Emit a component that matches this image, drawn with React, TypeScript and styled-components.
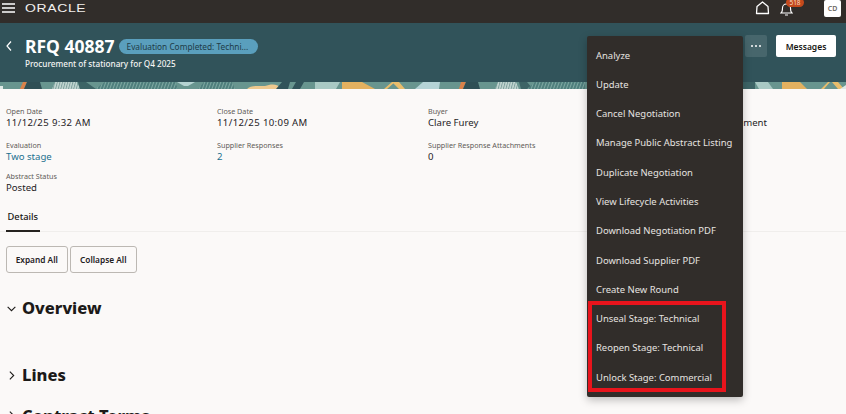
import React from "react";
import styled, { createGlobalStyle } from "styled-components";

const Global = createGlobalStyle`
  html, body { margin: 0; padding: 0; background: #fbf9f8; }
  body { width: 846px; height: 414px; overflow: hidden; font-family: "Noto Sans", "Open Sans", sans-serif; color: #161513; }
  * { box-sizing: border-box; }
`;

const Page = styled.div`
  position: relative;
  width: 846px;
  height: 414px;
  overflow: hidden;
`;
const TopBar = styled.header`
  height: 23px;
  background: #312d2a;
  display: flex;
  align-items: center;
  padding: 0 5px 7px 2px;
  color: #fff;
`;
const Logo = styled.span`
  margin-left: 10px;
  font-family: "Liberation Sans", sans-serif;
  font-size: 11px;
  letter-spacing: 0.5px;
  transform: scaleX(1.27);
  transform-origin: left center;
  color: #f2f0ee;
`;
const TopRight = styled.div`
  margin-left: auto;
  display: flex;
  align-items: center;
`;
const BellWrap = styled.div`
  position: relative;
  margin-left: 10px;
  width: 16px;
  height: 16px;
`;
const Badge = styled.span`
  position: absolute;
  left: 6px;
  top: -2px;
  height: 9px;
  width: 18px;
  text-align: center;
  border-radius: 5px;
  background: #c4491c;
  color: #f6d9c4;
  font-size: 6.5px;
  line-height: 9px;
`;
const Avatar = styled.div`
  width: 17px;
  height: 17px;
  margin-left: 28px;
  background: #fff;
  border-radius: 2px;
  color: #6b6763;
  font-size: 7px;
  font-weight: 600;
  display: flex;
  align-items: center;
  justify-content: center;
`;
const Hero = styled.section`
  height: 59px;
  background: #31535a;
  display: flex;
  align-items: flex-start;
  padding: 12px 10px 0 5px;
`;
const TitleBlock = styled.div`
  margin-left: 10px;
`;
const TitleRow = styled.div`
  display: flex;
  align-items: center;
  gap: 4px;
`;
const Title = styled.h1`
  margin: 0;
  font-size: 17.5px;
  line-height: 22px;
  font-weight: 700;
  color: #fff;
`;
const Pill = styled.span`
  width: 139px;
  height: 15px;
  border-radius: 8px;
  background: #5a9fbd;
  color: #1e3c48;
  font-size: 8.3px;
  line-height: 15px;
  padding-left: 8px;
  white-space: nowrap;
`;
const Subtitle = styled.div`
  font-size: 8.2px;
  line-height: 12px;
  margin-top: 1px;
  font-weight: 500;
  color: #f4f4f2;
`;
const HeroActions = styled.div`
  margin-left: auto;
  display: flex;
  align-items: center;
  gap: 9px;
`;
const DotsButton = styled.button`
  width: 22px;
  height: 22px;
  border: 0;
  border-radius: 2px;
  background: #47666c;
  color: #fff;
  display: flex;
  align-items: center;
  justify-content: center;
  padding: 0;
`;
const MessagesButton = styled.button`
  width: 60px;
  height: 22px;
  border: 0;
  border-radius: 2px;
  background: #fff;
  color: #161513;
  font-family: inherit;
  font-size: 8.5px;
  font-weight: 600;
  padding: 0;
`;
const Band = styled.div`
  height: 7px;
  overflow: hidden;
  line-height: 0;
`;
const Facts = styled.div`
  display: grid;
  grid-template-columns: repeat(3, 211px) 128px;
  padding: 18px 6px 0;
`;
const Fact = styled.div<{ $h: number; $end?: boolean }>`
  height: ${(p) => p.$h}px;
  white-space: nowrap;
  text-align: ${(p) => (p.$end ? "right" : "left")};
`;
const FactLabel = styled.div`
  font-size: 7.2px;
  line-height: 9px;
  min-height: 9px;
  color: #5f5b57;
`;
const FactValue = styled.div<{ $link?: boolean; $date?: boolean }>`
  font-size: 9.6px;
  line-height: 13px;
  letter-spacing: ${(p) => (p.$date ? "0.37px" : "0")};
  color: ${(p) => (p.$link ? "#22708f" : "#25221f")};
`;
const Tabs = styled.div`
  display: flex;
  height: 23.5px;
  margin-top: 7px;
  border-bottom: 1px solid #f0eeec;
  padding-left: 6px;
`;
const Tab = styled.div`
  height: 23.5px;
  padding: 0 1.5px;
  font-size: 9.3px;
  font-weight: 500;
  line-height: 16px;
  border-bottom: 2px solid #25221f;
`;
const ButtonRow = styled.div`
  display: flex;
  gap: 2.5px;
  padding: 14px 0 0 6px;
`;
const PlainButton = styled.button<{ $w: number }>`
  width: ${(p) => p.$w}px;
  height: 27px;
  border: 1px solid #bcb8b3;
  border-radius: 3px;
  background: #fbf9f8;
  font-family: inherit;
  font-size: 8.3px;
  font-weight: 600;
  color: #25221f;
  padding: 0;
`;
const Section = styled.div<{ $top: number }>`
  display: flex;
  align-items: center;
  margin-top: ${(p) => p.$top}px;
  padding-left: 6px;
  gap: 5px;
  height: 24px;
  color: #1c1a18;
`;
const SectionTitle = styled.h2`
  margin: 0;
  font-size: 16.5px;
  line-height: 24px;
  font-weight: 800;
  color: #1c1a18;
`;
const Menu = styled.nav`
  position: absolute;
  left: 586.5px;
  top: 35.5px;
  width: 156px;
  height: 361px;
  background: #312d2a;
  border-radius: 2px;
  box-shadow: 0 3px 8px rgba(0, 0, 0, 0.25);
  padding-top: 5px;
`;
const MenuItem = styled.div`
  height: 29.3px;
  line-height: 29.3px;
  padding-left: 9.5px;
  font-size: 9.45px;
  color: #e6e3e0;
  white-space: nowrap;
`;
const Highlight = styled.div`
  position: absolute;
  left: 588px;
  top: 301px;
  width: 138px;
  height: 91px;
  border: 4px solid #e8141c;
  pointer-events: none;
`;

const Chevron = ({ d, size = 11 }: { d: string; size?: number }) => (
  <svg width={size} height={size} viewBox="0 0 10 10" fill="none" stroke="currentColor" strokeWidth="1">
    <path d={d} />
  </svg>
);

const items = [
  "Analyze",
  "Update",
  "Cancel Negotiation",
  "Manage Public Abstract Listing",
  "Duplicate Negotiation",
  "View Lifecycle Activities",
  "Download Negotiation PDF",
  "Download Supplier PDF",
  "Create New Round",
  "Unseal Stage: Technical",
  "Reopen Stage: Technical",
  "Unlock Stage: Commercial",
];

type FactRow = { label: string; value: string; h: number; link?: boolean; date?: boolean; end?: boolean };

const facts: FactRow[] = [
  { label: "Open Date", value: "11/12/25 9:32 AM", h: 33.5, date: true },
  { label: "Close Date", value: "11/12/25 10:09 AM", h: 33.5, date: true },
  { label: "Buyer", value: "Clare Furey", h: 33.5 },
  { label: "", value: "ement", h: 33.5, end: true },
  { label: "Evaluation", value: "Two stage", h: 31, link: true },
  { label: "Supplier Responses", value: "2", h: 31, link: true },
  { label: "Supplier Response Attachments", value: "0", h: 31 },
  { label: "", value: "", h: 31 },
  { label: "Abstract Status", value: "Posted", h: 30 },
];

const BandArt = () => (
  <svg width="846" height="7" viewBox="0 0 846 7">
    <defs>
      <pattern id="st" width="3" height="3" patternUnits="userSpaceOnUse" patternTransform="rotate(20)">
        <rect width="3" height="3" fill="#4f7f7d" />
        <rect width="1" height="3" fill="#7fa8a2" />
      </pattern>
      <pattern id="pale" width="2.5" height="3" patternUnits="userSpaceOnUse" patternTransform="rotate(15)">
        <rect width="2.5" height="3" fill="#c5d8d3" />
        <rect width="1" height="3" fill="#7d9f9c" />
      </pattern>
    </defs>
    <rect width="846" height="7" fill="#68958f" />
    <path d="M0 4h3v3H0z" fill="#dfe9e6" />
    <path d="M23 0h4l-3 7h-4z" fill="#d9824a" />
    <path d="M27 0h13l2 7H24z" fill="#2f4f55" />
    <path d="M55 0h22l3 7H52z" fill="url(#pale)" />
    <path d="M78 0h8l10 7H80z" fill="#3d6466" />
    <path d="M95 7l10-7h70l3 7z" fill="url(#st)" />
    <path d="M177 0h18l-7 4-4 0z" fill="#b5d3d2" />
    <path d="M198 7l6-7h28l3 7z" fill="url(#st)" />
    <path d="M247 7c3-4 12-3 18-3 6-2 12-3 17 3z" fill="#eec98f" />
    <path d="M282 0h8l-2 7h-12zM296 0h8l-4 7h-8z" fill="#31535a" />
    <path d="M315 0h25l-4 7h-21z" fill="#a9c9c4" />
    <path d="M342 0h20l13 7h-33z" fill="#e3b160" />
    <path d="M384 7l8-7h3l-8 7zM392 0h7l6 7h-6z" fill="#e9bd6c" />
    <path d="M423 0h17l-1 7h-24z" fill="#b5d3d6" />
    <path d="M461 0h5l-3 7h-4z" fill="#d9824a" />
    <path d="M466 0h12l2 7h-17z" fill="#2f4f55" />
    <path d="M498 0h18l3 7h-24z" fill="url(#pale)" />
    <path d="M519 0h8l6 7h-12z" fill="#3d6466" />
    <path d="M527 7l8-7h50v7z" fill="url(#st)" />
    <path d="M743 0h12v7h-12z" fill="#3d6466" />
    <path d="M755 0h13l5 7h-14z" fill="#a9c9c4" />
    <path d="M782 0h18l7 7h-25z" fill="#e3b160" />
    <path d="M821 7l7-7h2l-6 7zM832 0h6l6 7h-6z" fill="#e9bd6c" />
    <path d="M840 7l6-4v4z" fill="#dfe9e6" />
  </svg>
);

export default function App() {
  return (
    <Page>
      <Global />
      <TopBar>
        <svg width="13" height="10" viewBox="0 0 13 10" stroke="#fff" strokeWidth="1.5">
          <path d="M0 1h13M0 5h13M0 9h13" />
        </svg>
        <Logo>ORACLE</Logo>
        <TopRight>
          <svg width="15" height="14" viewBox="0 0 15 14" fill="none" stroke="#fff" strokeWidth="1.3" strokeLinejoin="round">
            <path d="M1.5 12.5 2 5.5 7.5 1 13 5.5l.5 7z" />
          </svg>
          <BellWrap>
            <svg width="13" height="15" viewBox="0 0 13 15" fill="none" stroke="#fff" strokeWidth="1.1">
              <path d="M1 11c1.5-1 1.5-3 1.5-5a4 4 0 0 1 8 0c0 2 0 4 1.5 5zM5 13h3" />
            </svg>
            <Badge>518</Badge>
          </BellWrap>
          <Avatar>CD</Avatar>
        </TopRight>
      </TopBar>
      <Hero>
        <svg width="10" height="12" viewBox="0 0 10 12" fill="none" stroke="#fff" strokeWidth="1.2" style={{ marginTop: 5 }}>
          <path d="M6 1.5 2 6l4 4.5" />
        </svg>
        <TitleBlock>
          <TitleRow>
            <Title>RFQ 40887</Title>
            <Pill>Evaluation Completed: Techni...</Pill>
          </TitleRow>
          <Subtitle>Procurement of stationary for Q4 2025</Subtitle>
        </TitleBlock>
        <HeroActions>
          <DotsButton aria-label="More">
            <svg width="12" height="4" viewBox="0 0 12 4" fill="#fff">
              <circle cx="2" cy="2" r="1" />
              <circle cx="6" cy="2" r="1" />
              <circle cx="10" cy="2" r="1" />
            </svg>
          </DotsButton>
          <MessagesButton>Messages</MessagesButton>
        </HeroActions>
      </Hero>
      <Band>
        <BandArt />
      </Band>
      <Facts>
        {facts.map((f, i) => (
          <Fact key={i} $h={f.h} $end={f.end}>
            <FactLabel>{f.label}</FactLabel>
            <FactValue $link={f.link} $date={f.date}>{f.value}</FactValue>
          </Fact>
        ))}
      </Facts>
      <Tabs>
        <Tab>Details</Tab>
      </Tabs>
      <ButtonRow>
        <PlainButton $w={61.5}>Expand All</PlainButton>
        <PlainButton $w={66.5}>Collapse All</PlainButton>
      </ButtonRow>
      <Section $top={23}>
        <Chevron d="M1.5 3.5 5 7l3.5-3.5" />
        <SectionTitle>Overview</SectionTitle>
      </Section>
      <Section $top={43}>
        <Chevron d="M3.5 1.5 7 5 3.5 8.5" />
        <SectionTitle>Lines</SectionTitle>
      </Section>
      <Section $top={16.5}>
        <Chevron d="M3.5 1.5 7 5 3.5 8.5" />
        <SectionTitle>Contract Terms</SectionTitle>
      </Section>
      <Menu>
        {items.map((t) => (
          <MenuItem key={t}>{t}</MenuItem>
        ))}
      </Menu>
      <Highlight />
    </Page>
  );
}
